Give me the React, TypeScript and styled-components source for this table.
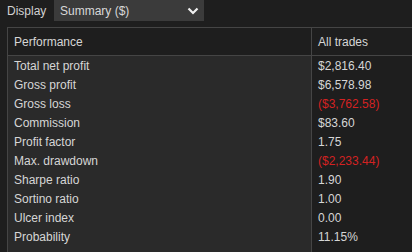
import styled, { createGlobalStyle } from "styled-components";

const GlobalStyle = createGlobalStyle`
  html, body {
    margin: 0;
    padding: 0;
    background: #1e1e1e;
    font-family: "Liberation Sans", Arial, sans-serif;
    font-size: 12px;
    color: #d6d6d6;
    overflow: hidden;
  }
`;

type Metric = { label: string; value: string; negative?: boolean };

const metrics: Metric[] = [
  { label: "Total net profit", value: "$2,816.40" },
  { label: "Gross profit", value: "$6,578.98" },
  { label: "Gross loss", value: "($3,762.58)", negative: true },
  { label: "Commission", value: "$83.60" },
  { label: "Profit factor", value: "1.75" },
  { label: "Max. drawdown", value: "($2,233.44)", negative: true },
  { label: "Sharpe ratio", value: "1.90" },
  { label: "Sortino ratio", value: "1.00" },
  { label: "Ulcer index", value: "0.00" },
  { label: "Probability", value: "11.15%" },
];

export default function App() {
  return (
    <>
      <GlobalStyle />
      <Page>
        <Toolbar>
          <Label>Display</Label>
          <Select>
            <span>Summary ($)</span>
            <svg width="12" height="8" viewBox="0 0 12 8">
              <path d="M1.5 1.5 L6 6 L10.5 1.5" fill="none" stroke="#f0f0f0" strokeWidth="2.2" />
            </svg>
          </Select>
        </Toolbar>
        <Grid>
          <HeadCell>Performance</HeadCell>
          <HeadCell $value>All trades</HeadCell>
          {metrics.map((m) => (
            <Row key={m.label}>
              <NameCell>{m.label}</NameCell>
              <ValueCell $negative={m.negative}>{m.value}</ValueCell>
            </Row>
          ))}
          <Row>
            <NameCell />
            <ValueCell />
          </Row>
        </Grid>
      </Page>
    </>
  );
}

const Page = styled.div`
  width: 412px;
  height: 252px;
  display: flex;
  flex-direction: column;
  gap: 6px;
`;

const Toolbar = styled.div`
  display: flex;
  align-items: center;
  height: 21px;
  padding-left: 7px;
`;

const Label = styled.span`
  width: 47px;
  color: #d2d2d2;
`;

const Select = styled.div`
  display: flex;
  align-items: center;
  justify-content: space-between;
  width: 150px;
  height: 21px;
  box-sizing: border-box;
  padding: 0 5px 0 6px;
  background: #3b3b3b;
  color: #d8d8d8;
`;

const Grid = styled.div`
  flex: 1;
  margin-left: 7px;
  display: grid;
  grid-template-columns: 303px 1fr;
  grid-template-rows: 28px repeat(10, 19px) 1fr;
  border-left: 1px solid #454545;
  border-top: 1px solid #454545;
  background: #1e1e1e;
`;

const HeadCell = styled.div<{ $value?: boolean }>`
  display: flex;
  align-items: center;
  padding-left: 6px;
  border-bottom: 1px solid #454545;
  border-left: ${(p) => (p.$value ? "1px solid #454545" : "none")};
  background: #1e1e1e;
  color: #d6d6d6;
`;

const Row = styled.div`
  display: contents;
`;

const NameCell = styled.div`
  display: flex;
  align-items: center;
  padding-left: 6px;
  background: #2a2a2a;
  color: #d6d6d6;
`;

const ValueCell = styled.div<{ $negative?: boolean }>`
  display: flex;
  align-items: center;
  padding-left: 6px;
  border-left: 1px solid #454545;
  background: #1e1e1e;
  color: ${(p) => (p.$negative ? "#d42222" : "#d6d6d6")};
`;
